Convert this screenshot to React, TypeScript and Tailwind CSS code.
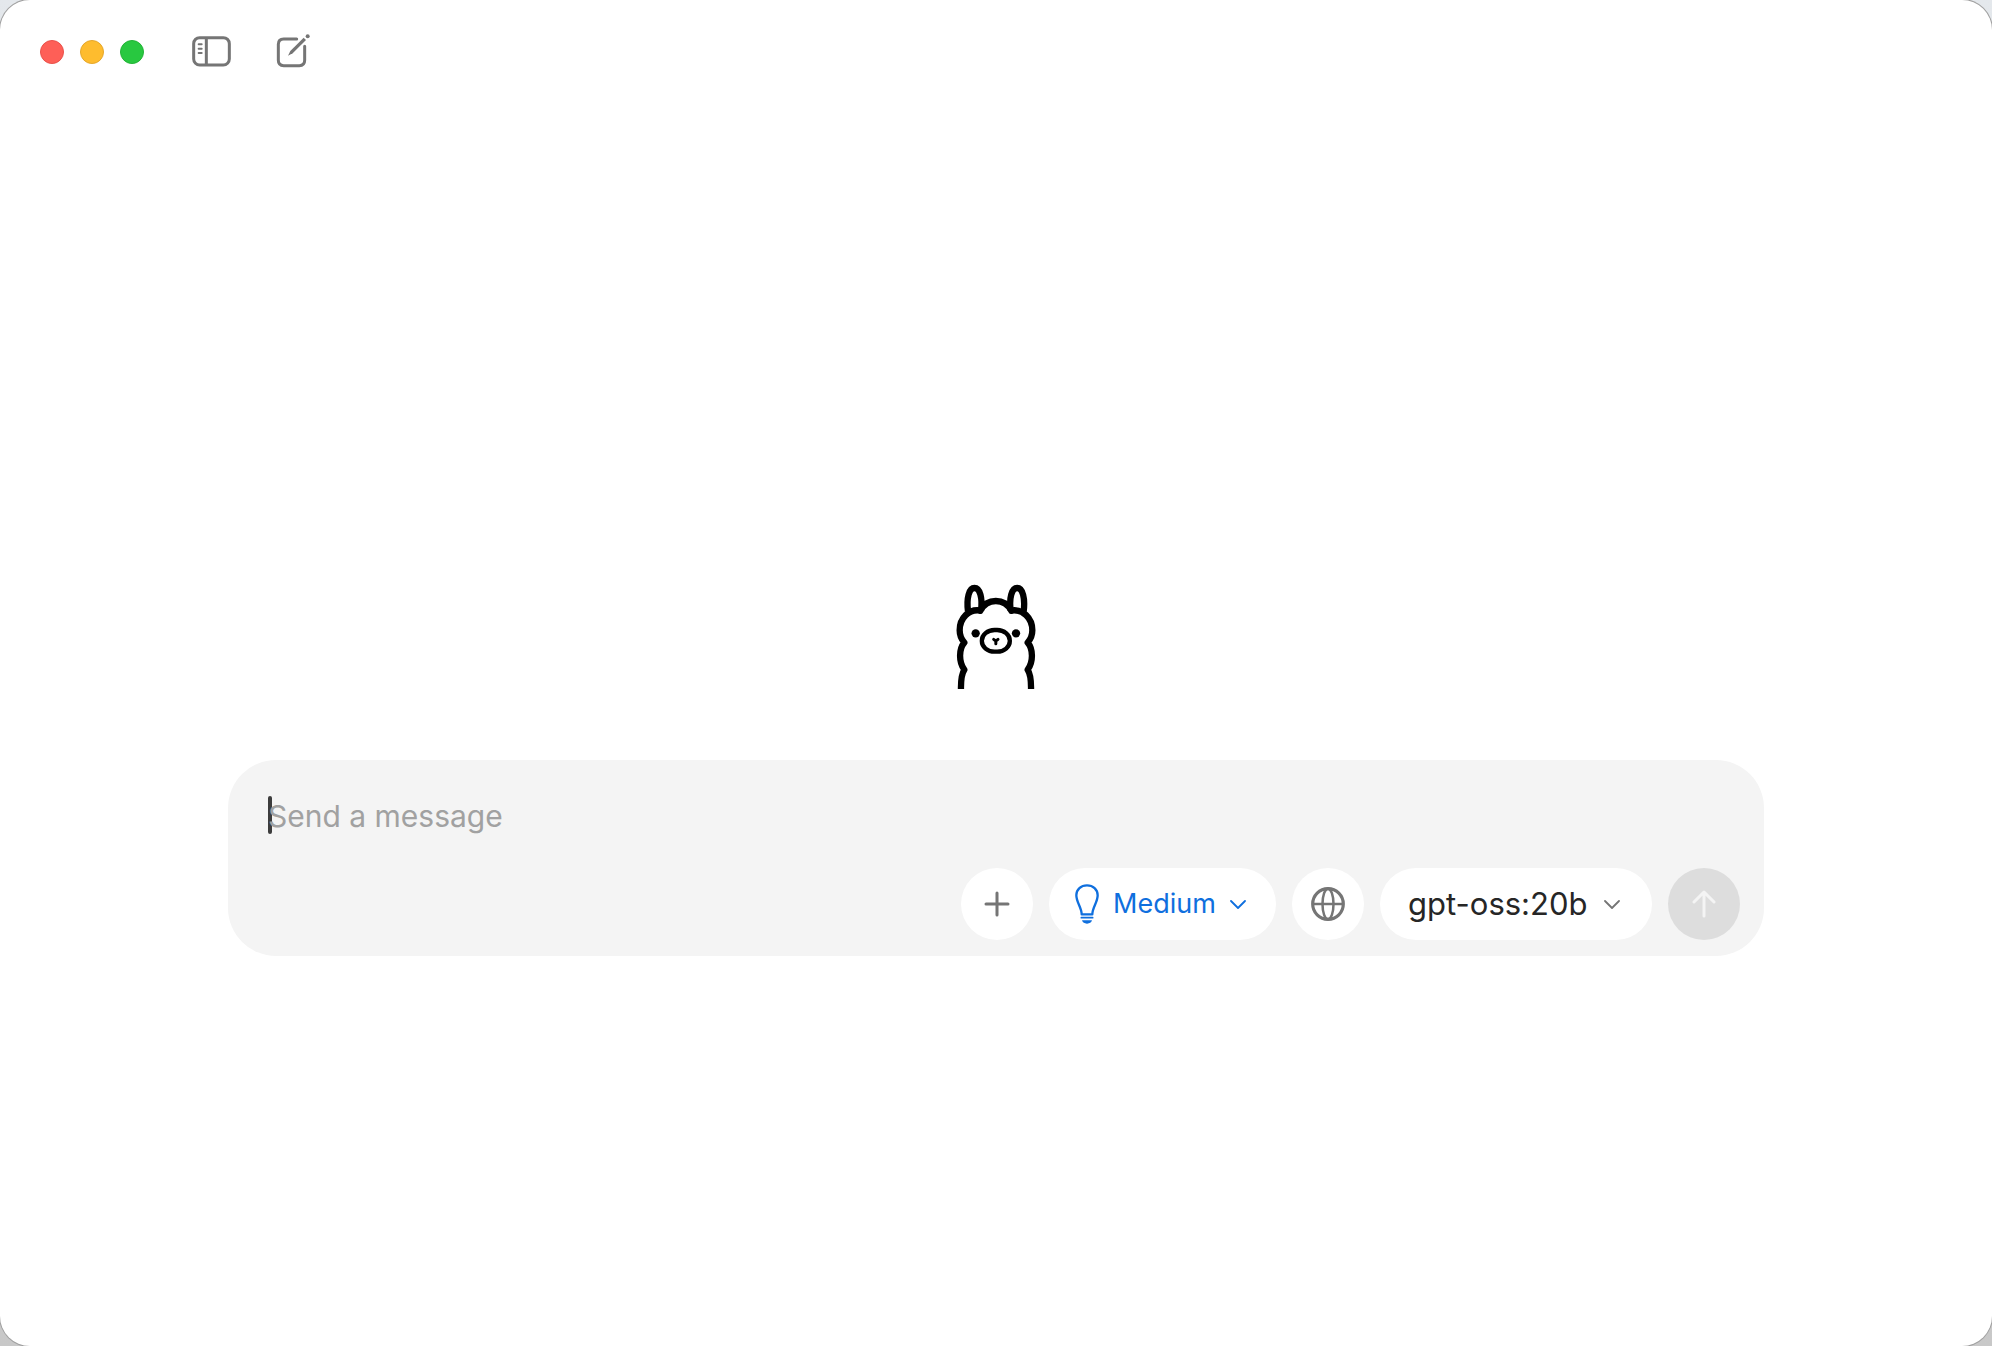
import React, { useState } from 'react';

const models = ['gpt-oss:20b'];
const thinkLevels = ['Medium'];

function LlamaLogo() {
    return (
        <svg viewBox="49 39 240 315" className="w-20 h-[105px]" fill="none" stroke="black" strokeWidth="19" role="img" aria-label="Llama">
            <path d="M124 119C87 112 60 142 60 178C60 194 66 206 74 215C57 234 57 274 74 296C66 308 63 326 64 360" strokeLinejoin="round" />
            <path d="M213 119C250 112 278 142 278 178C278 194 272 206 264 215C281 234 281 274 264 296C272 308 275 326 274 360" strokeLinejoin="round" />
            <path d="M122 119C132 100 149 90 168.5 90C188 90 205 100 215 119" strokeLinecap="round" />
            <path d="M85 121C80 82 88 51 104.5 51C121 51 129 82 124 118" />
            <path d="M252 121C257 82 249 51 232.5 51C216 51 208 82 213 118" />
            <rect x="126.5" y="177" width="84" height="65" rx="38" ry="32" strokeWidth="13" />
            <circle cx="108" cy="187" r="12.5" fill="black" stroke="none" />
            <circle cx="229" cy="187" r="12.5" fill="black" stroke="none" />
            <path d="M162 205L168.5 210L175 205M168.5 210V218" strokeWidth="9" strokeLinecap="round" strokeLinejoin="round" />
        </svg>
    );
}

function SidebarIcon() {
    return (
        <svg viewBox="0 0 120 96" className="w-10 h-8" fill="none" stroke="currentColor" strokeWidth="9" aria-hidden="true">
            <rect x="5" y="5" width="107" height="82" rx="18" />
            <path d="M43 5V87" />
            <path d="M20 25H29M20 38H29M20 51H29" strokeWidth="6" strokeLinecap="round" />
        </svg>
    );
}

function ComposeIcon() {
    return (
        <svg viewBox="0 0 108 108" className="w-9 h-9" fill="none" stroke="currentColor" strokeWidth="9" aria-hidden="true">
            <path d="M62 15H23Q7 15 7 31V79Q7 95 23 95H70Q86 95 86 79V37" strokeLinecap="round" />
            <path d="M83 11L90 18L50 58L36 65L43 51Z" fill="currentColor" stroke="none" />
            <circle cx="95" cy="7" r="6" fill="currentColor" stroke="none" />
        </svg>
    );
}

function BulbIcon() {
    return (
        <svg viewBox="0 0 72 120" className="w-6 h-10" fill="none" stroke="currentColor" strokeWidth="7" aria-hidden="true">
            <path d="M20 91C20 71 4 55 4 34C4 16 18 4 36 4C54 4 68 16 68 34C68 55 52 71 52 91Z" strokeLinejoin="round" />
            <path d="M19 101H53" strokeLinecap="round" strokeWidth="5" />
            <path d="M21 109H51Q48 119 36 119Q24 119 21 109Z" fill="currentColor" stroke="none" />
        </svg>
    );
}

function GlobeIcon() {
    return (
        <svg viewBox="0 0 34 34" className="w-[34px] h-[34px]" fill="none" stroke="currentColor" strokeWidth="2.5" aria-hidden="true">
            <circle cx="17" cy="17" r="15.3" strokeWidth="3.2" />
            <ellipse cx="17" cy="17" rx="5.5" ry="15.3" />
            <path d="M2 17H32" />
        </svg>
    );
}

function ChevronIcon() {
    return (
        <svg viewBox="0 0 16 10" className="w-4 h-[10px]" fill="none" stroke="currentColor" strokeWidth="1.8" strokeLinecap="round" strokeLinejoin="round" aria-hidden="true">
            <path d="M1 2L8 9L15 2" />
        </svg>
    );
}

export default function App() {
    const [message, setMessage] = useState('');
    const [level, setLevel] = useState('Medium');
    const [model, setModel] = useState('gpt-oss:20b');

    return (
        <div className="min-h-screen flex bg-linear-to-b from-[#e4e8ec] to-[#c8c8c8] font-['Inter',sans-serif]">
            <div className="flex-1 flex flex-col bg-white rounded-[30px] ring-1 ring-[#a0a0a0]">
                <header className="h-[104px] px-10 flex items-center text-[#757575]">
                    <div className="flex items-center gap-4">
                        <button aria-label="Close" className="w-6 h-6 rounded-full bg-[#fe5f57] border border-[#e9514a]"></button>
                        <button aria-label="Minimize" className="w-6 h-6 rounded-full bg-[#febc2e] border border-[#e5a72b]"></button>
                        <button aria-label="Zoom" className="w-6 h-6 rounded-full bg-[#28c840] border border-[#22b336]"></button>
                    </div>
                    <div className="flex items-center gap-11 ml-12">
                        <button aria-label="Toggle sidebar"><SidebarIcon /></button>
                        <button aria-label="New chat"><ComposeIcon /></button>
                    </div>
                </header>

                <main className="flex-1 flex flex-col items-center justify-center px-10 pt-[89px]">
                    <LlamaLogo />
                    <form onSubmit={(e) => e.preventDefault()} className="mt-[71px] w-full max-w-[1536px] rounded-[48px] bg-[#f4f4f4] pt-9 pb-4 pl-10 pr-6">
                        <div className="relative">
                            {message === '' && <span className="absolute left-0 top-0 w-1 h-[38px] rounded-sm bg-[#3c3c3c]"></span>}
                            <textarea
                                rows={1}
                                aria-label="Message"
                                placeholder="Send a message"
                                value={message}
                                onChange={(e) => setMessage(e.target.value)}
                                className="relative block w-full h-10 resize-none overflow-hidden bg-transparent text-[30px] leading-10 text-[#262626] placeholder:text-[#a1a1a1] outline-none"
                            />
                        </div>
                        <div className="mt-8 flex items-center justify-end gap-4">
                            <button type="button" aria-label="Add attachment" className="w-[72px] h-[72px] rounded-full bg-white text-[#757575] flex items-center justify-center">
                                <svg viewBox="0 0 26 26" className="w-[26px] h-[26px]" fill="none" stroke="currentColor" strokeWidth="3" strokeLinecap="round" aria-hidden="true">
                                    <path d="M13 2V24M2 13H24" />
                                </svg>
                            </button>
                            <label className="h-[72px] pl-[26px] pr-[30px] rounded-full bg-white text-[#0f6fde] flex items-center gap-[14px]">
                                <BulbIcon />
                                <select aria-label="Thinking level" value={level} onChange={(e) => setLevel(e.target.value)} className="appearance-none bg-transparent text-[27px] leading-10 outline-none">
                                    {thinkLevels.map((name) => <option key={name}>{name}</option>)}
                                </select>
                                <ChevronIcon />
                            </label>
                            <button type="button" aria-label="Web search" className="w-[72px] h-[72px] rounded-full bg-white text-[#757575] flex items-center justify-center">
                                <GlobeIcon />
                            </button>
                            <label className="h-[72px] pl-7 pr-8 rounded-full bg-white text-[#757575] flex items-center gap-4">
                                <select aria-label="Model" value={model} onChange={(e) => setModel(e.target.value)} className="appearance-none bg-transparent text-[31px] leading-10 text-[#262626] outline-none">
                                    {models.map((name) => <option key={name}>{name}</option>)}
                                </select>
                                <ChevronIcon />
                            </label>
                            <button type="submit" aria-label="Send" className="w-[72px] h-[72px] rounded-full bg-[#dddddd] text-[#f4f4f4] flex items-center justify-center">
                                <svg viewBox="0 0 24 28" className="w-6 h-7" fill="none" stroke="currentColor" strokeWidth="3" strokeLinecap="round" strokeLinejoin="round" aria-hidden="true">
                                    <path d="M12 26V2M2 12L12 2L22 12" />
                                </svg>
                            </button>
                        </div>
                    </form>
                </main>
            </div>
        </div>
    );
}
